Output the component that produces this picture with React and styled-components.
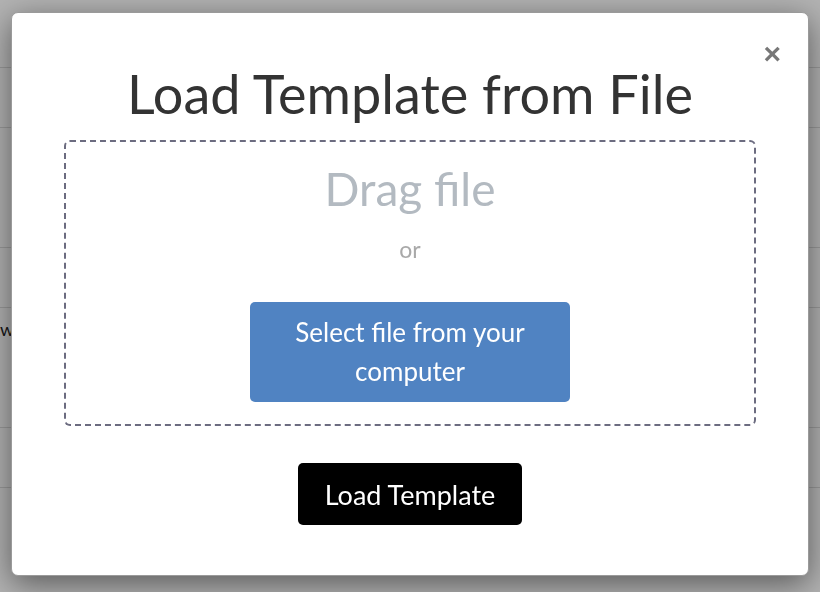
import React from 'react';
import styled, { createGlobalStyle } from 'styled-components';

const GlobalStyle = createGlobalStyle`
  html, body {
    margin: 0;
    padding: 0;
    height: 100%;
    overflow: hidden;
    background: #ffffff;
    font-family: Lato, "Open Sans", sans-serif;
  }
`;

const Page = styled.div`
  height: 592px;
  display: flex;
  flex-direction: column;
  padding-top: 8px;
`;

const Row = styled.div`
  height: ${p => p.h}px;
  box-sizing: border-box;
  border-bottom: 1px solid #dddddd;
  padding-top: 10px;
  font-size: 18px;
  color: #222;
`;

const Overlay = styled.div`
  position: fixed;
  inset: 0;
  background: rgba(0, 0, 0, 0.3);
  display: flex;
  align-items: flex-start;
  justify-content: center;
  padding-top: 12px;
`;

const Modal = styled.div`
  position: relative;
  width: 798px;
  height: 564px;
  box-sizing: border-box;
  background: #fff;
  border: 1px solid #9a9a9a;
  border-radius: 7px;
  box-shadow: 0 8px 32px rgba(0, 0, 0, 0.5);
  display: flex;
  flex-direction: column;
  align-items: center;
  padding: 42px 52px 0;
`;

const Close = styled.button`
  position: absolute;
  top: 26px;
  right: 27px;
  border: none;
  background: none;
  padding: 0;
  font-family: Arial, "Liberation Sans", sans-serif;
  font-size: 30px;
  font-weight: 700;
  color: #777;
  line-height: 1;
  cursor: pointer;
`;

const Title = styled.h1`
  margin: 0;
  font-size: 54px;
  font-weight: 400;
  color: #333;
  line-height: 78px;
`;

const DropZone = styled.div`
  margin-top: 7px;
  width: 692px;
  box-sizing: border-box;
  border: 2px dashed #6c6c80;
  border-radius: 6px;
  display: flex;
  flex-direction: column;
  align-items: center;
  padding: 18px 0 22px;
`;

const DragText = styled.div`
  font-size: 46px;
  color: #b3bac1;
  line-height: 58px;
`;

const OrText = styled.div`
  margin-top: 11px;
  font-size: 23px;
  color: #a9a9a9;
  line-height: 40px;
`;

const SelectButton = styled.button`
  margin-top: 33px;
  width: 320px;
  height: 100px;
  border: none;
  border-radius: 5px;
  background: #5083c2;
  color: #fff;
  font-family: inherit;
  font-size: 26px;
  line-height: 39px;
  padding: 0 24px;
  cursor: pointer;
`;

const LoadButton = styled.button`
  margin-top: 37px;
  width: 224px;
  height: 62px;
  border: none;
  border-radius: 5px;
  background: #000;
  color: #fff;
  font-family: inherit;
  font-size: 27px;
  cursor: pointer;
`;

const rows = [60, 60, 120, 60, 120, 60];

export default function App() {
  return (
    <>
      <GlobalStyle />
      <Page>
        {rows.map((h, i) => (
          <Row key={i} h={h}>{i === 4 ? 'w' : ''}</Row>
        ))}
      </Page>
      <Overlay>
        <Modal>
          <Close aria-label="Close">×</Close>
          <Title>Load Template from File</Title>
          <DropZone>
            <DragText>Drag file</DragText>
            <OrText>or</OrText>
            <SelectButton>Select file from your computer</SelectButton>
          </DropZone>
          <LoadButton>Load Template</LoadButton>
        </Modal>
      </Overlay>
    </>
  );
}
